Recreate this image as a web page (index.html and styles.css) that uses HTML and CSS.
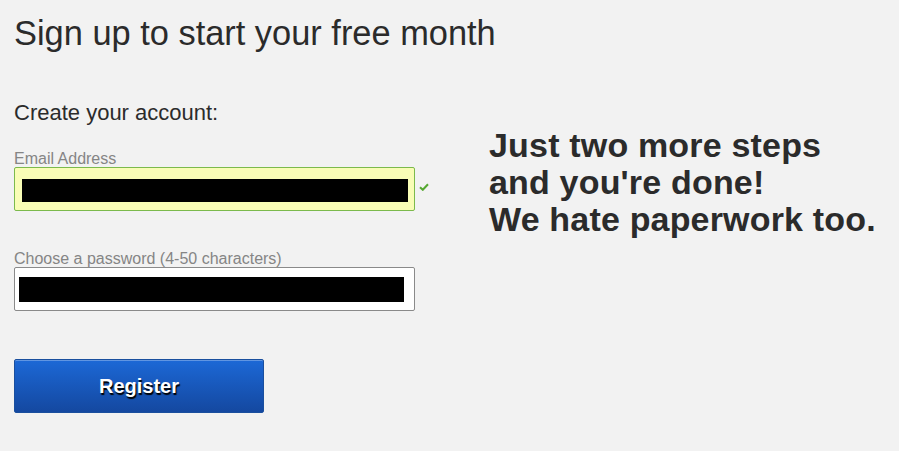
FILE: index.html
```html
<!DOCTYPE html>
<html>
<head>
<meta charset="utf-8">
<link rel="stylesheet" href="styles.css">
</head>
<body>
<div class="page">
  <h1 class="title">Sign up to start your free month</h1>
  <div class="columns">
    <form class="form">
      <div class="subtitle">Create your account:</div>
      <label class="label">Email Address</label>
      <div class="field-row">
        <div class="input input-valid"><span class="redact redact-email"></span></div>
        <svg class="check" width="10" height="8" viewBox="0 0 10 8"><path d="M1 4.2 L3.8 6.8 L9 1.2" fill="none" stroke="#55a830" stroke-width="2"/></svg>
      </div>
      <label class="label label-pw">Choose a password (4-50 characters)</label>
      <div class="field-row">
        <div class="input input-pw"><span class="redact redact-pw"></span></div>
      </div>
      <button type="button" class="btn">Register</button>
    </form>
    <div class="promo">Just two more steps<br>and you're done!<br>We hate paperwork too.</div>
  </div>
</div>
</body>
</html>
```
FILE: styles.css
```css
html, body { margin: 0; padding: 0; }
body { background: #f2f2f2; font-family: "Liberation Sans", Arial, sans-serif; color: #2a2a2a; width: 899px; height: 451px; overflow: hidden; }
.page { padding: 0 0 0 14px; }
.title { margin: 0; padding-top: 13px; font-size: 34.4px; font-weight: normal; line-height: 40px; height: 40px; color: #2b2b2b; }
.columns { display: flex; }
.form { width: 402px; display: flex; flex-direction: column; padding-top: 48px; }
.subtitle { font-size: 22px; line-height: 24px; height: 24px; color: #2b2b2b; }
.label { font-size: 16px; line-height: 17px; height: 17px; color: #858585; margin-top: 25px; }
.label-pw { margin-top: 39px; }
.field-row { display: flex; position: relative; }
.input { box-sizing: border-box; width: 401px; height: 44px; border-radius: 2px; display: flex; align-items: flex-start; }
.input-valid { background: #f9fdb6; border: 1px solid #7cba4c; padding: 11px 0 0 7px; }
.input-pw { background: #fff; border: 1px solid #8a8a8a; padding: 9px 0 0 4px; }
.redact { display: block; background: #000; }
.redact-email { width: 386px; height: 23px; }
.redact-pw { width: 385px; height: 25px; }
.check { position: absolute; left: 405px; top: 16px; }
.btn { margin-top: 48px; width: 250px; height: 54px; border: 1px solid #1a4f9e; border-radius: 2px; background: linear-gradient(#1c68d6, #1448a0); color: #fff; font-family: "Liberation Sans", Arial, sans-serif; font-weight: bold; font-size: 20px; text-shadow: 1px 2px 1px #000; padding: 0; box-shadow: inset 0 1px 0 rgba(255,255,255,0.3); }
.promo { margin-left: 73px; padding-top: 74px; font-size: 34px; font-weight: bold; line-height: 37px; letter-spacing: 0.18px; color: #2b2b2b; }
```
